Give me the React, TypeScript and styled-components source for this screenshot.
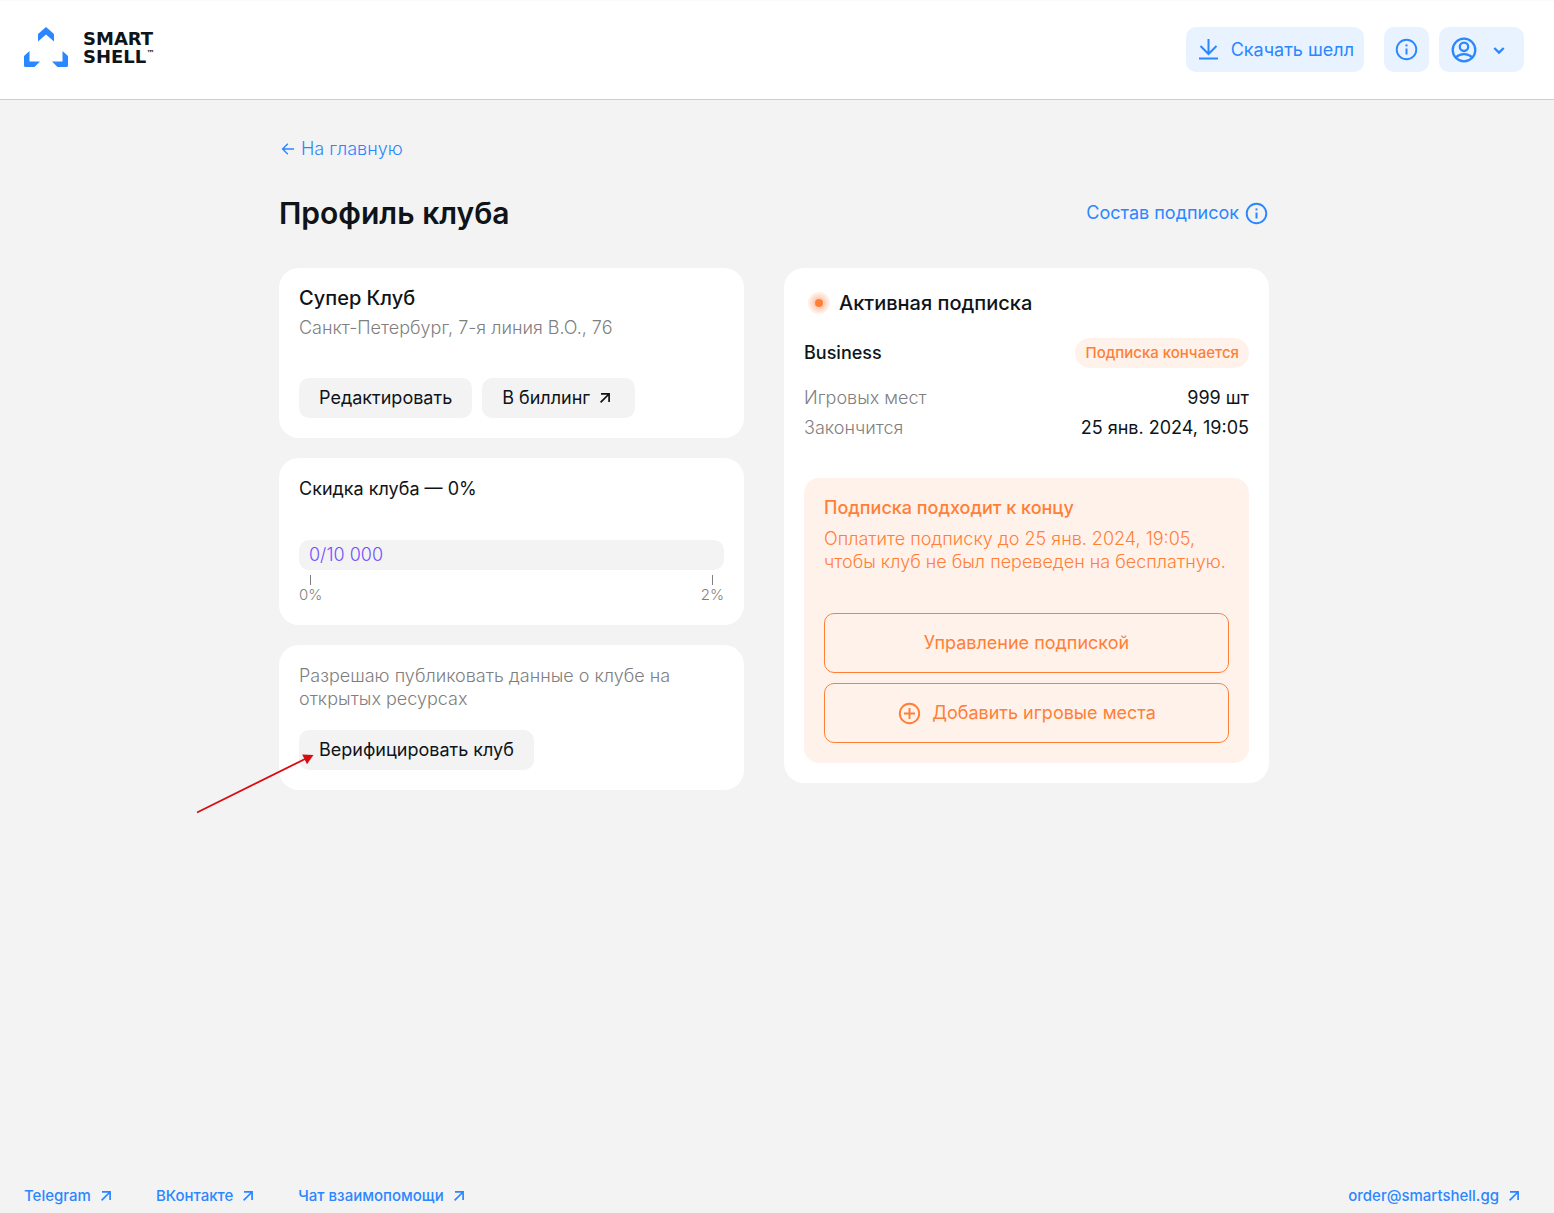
import React from 'react';
import styled, { createGlobalStyle } from 'styled-components';

const color = {
  ink: '#0e1419',
  muted: '#7f7f7f',
  page: '#f3f3f3',
  blue: '#2b87ff',
  blueSoft: '#e9f3ff',
  orange: '#ff7f37',
  orangeSoft: '#fff2eb',
  violet: '#7350ff',
};

const GlobalStyle = createGlobalStyle`
  *, *::before, *::after { box-sizing: border-box; }
  body {
    margin: 0;
    background: ${color.page};
    color: ${color.ink};
    font-family: Inter, "Liberation Sans", sans-serif;
    font-size: 18px;
    line-height: 20px;
  }
  h1, h2, h3, p, dl, dd { margin: 0; }
  button { font: inherit; color: inherit; border: 0; cursor: pointer; }
  a { color: ${color.blue}; text-decoration: none; }
  svg { display: block; flex: none; }
`;

const Page = styled.div`
  display: flex;
  flex-direction: column;
  min-height: 100vh;
`;

const Header = styled.header`
  display: flex;
  align-items: flex-start;
  justify-content: space-between;
  padding: 26px 30px 27px 24px;
  background: #fff;
  border-top: 1px solid #fafafa;
  border-bottom: 1px solid #cfcfcf;
`;

const Logo = styled.a`
  display: flex;
  align-items: center;
  gap: 14px;
  color: ${color.ink};
`;

const Wordmark = styled.span`
  display: flex;
  flex-direction: column;
  padding-top: 2px;
  font: bold 18px/18px "DejaVu Sans", Inter, sans-serif;
`;

const ShellLine = styled.span`
  display: flex;
  align-items: flex-start;
`;

const Trade = styled.small`
  font-size: 8px;
  line-height: 12px;
`;

const HeaderActions = styled.div`
  display: flex;
  gap: 10px;
`;

const HeaderButton = styled.button<{ $spaced?: boolean; $tight?: boolean }>`
  display: flex;
  align-items: center;
  gap: ${(p) => (p.$tight ? '5px' : '10px')};
  height: 45px;
  padding: 0 10px;
  margin-right: ${(p) => (p.$spaced ? '10px' : '0')};
  border-radius: 10px;
  background: ${color.blueSoft};
  color: ${color.blue};
`;

const Main = styled.main`
  flex: 1;
  padding: 38px 30px 40px 24px;
`;

const Content = styled.div`
  max-width: 990px;
  margin: 0 auto;
`;

const BackLink = styled.a`
  display: inline-flex;
  align-items: center;
  gap: 4px;
  font-weight: 300;
  line-height: 22px;
  vertical-align: top;
`;

const TitleRow = styled.div`
  display: flex;
  align-items: center;
  justify-content: space-between;
  margin: 35px 0 37px;
`;

const Title = styled.h1`
  font-size: 30px;
  line-height: 36px;
  font-weight: 600;
`;

const PlansLink = styled.a`
  display: flex;
  align-items: center;
  gap: 5px;
`;

const Columns = styled.div`
  display: grid;
  grid-template-columns: 465fr 485fr;
  align-items: start;
  gap: 40px;
`;

const Stack = styled.div`
  display: flex;
  flex-direction: column;
  gap: 20px;
`;

const Card = styled.section`
  padding: 20px;
  border-radius: 20px;
  background: #fff;
`;

const CardTitle = styled.h2`
  font-size: 20px;
  line-height: 20px;
  font-weight: 500;
`;

const Address = styled.p`
  margin: 10px 0 40px;
  color: ${color.muted};
  font-weight: 300;
`;

const Row = styled.div`
  display: flex;
  gap: 10px;
`;

const SoftButton = styled.button`
  display: flex;
  align-items: center;
  gap: 5px;
  height: 40px;
  padding: 0 20px;
  border-radius: 10px;
  background: ${color.page};
`;

const DiscountTitle = styled.p`
  line-height: 22px;
  margin-bottom: 40px;
`;

const Progress = styled.div`
  height: 30px;
  padding: 0 10px;
  border-radius: 10px;
  background: ${color.page};
  color: ${color.violet};
  font-weight: 300;
  line-height: 30px;
`;

const Scale = styled.div`
  display: flex;
  justify-content: space-between;
  margin-top: 5px;
`;

const Mark = styled.span`
  display: flex;
  flex-direction: column;
  align-items: center;
  color: ${color.muted};
  font-size: 15px;
  font-weight: 300;

  &::before {
    content: '';
    width: 1px;
    height: 10px;
    background: ${color.muted};
  }
`;

const Consent = styled.p`
  margin-bottom: 20px;
  color: ${color.muted};
  font-weight: 300;
  line-height: 1.25;
`;

const Pointed = styled.div`
  position: relative;
  width: fit-content;
`;

const PointerArrow = styled.svg`
  position: absolute;
  top: 20px;
  left: -105px;
  pointer-events: none;
`;

const StatusHead = styled.div`
  display: flex;
  align-items: center;
  gap: 5px;
`;

const PlanRow = styled.div`
  display: flex;
  align-items: center;
  justify-content: space-between;
  margin: 20px 0;
`;

const PlanName = styled.h3`
  font-size: 18px;
  font-weight: 500;
`;

const Badge = styled.span`
  padding: 0 10px;
  border-radius: 15px;
  background: ${color.orangeSoft};
  color: ${color.orange};
  font-size: 15px;
  font-weight: 450;
  line-height: 30px;
`;

const Details = styled.dl`
  display: flex;
  flex-direction: column;
  gap: 10px;
  margin-bottom: 40px;
`;

const Detail = styled.div`
  display: flex;
  justify-content: space-between;
`;

const DetailName = styled.dt`
  color: ${color.muted};
  font-weight: 300;
`;

const Notice = styled.div`
  display: flex;
  flex-direction: column;
  gap: 10px;
  padding: 20px;
  border-radius: 15px;
  background: ${color.orangeSoft};
  color: ${color.orange};
`;

const NoticeTitle = styled.h3`
  font-size: 18px;
  font-weight: 500;
`;

const NoticeText = styled.p`
  margin-bottom: 30px;
  font-weight: 300;
  line-height: 1.25;
`;

const OutlineButton = styled.button`
  display: flex;
  align-items: center;
  justify-content: center;
  gap: 10px;
  height: 60px;
  border: 1px solid ${color.orange};
  border-radius: 10px;
  background: transparent;
`;

const Footer = styled.footer`
  display: flex;
  gap: 40px;
  padding: 0 30px 7px 24px;
  font-size: 15px;
  font-weight: 450;
`;

const FooterLink = styled.a<{ $last?: boolean }>`
  display: flex;
  align-items: center;
  gap: 5px;
  margin-left: ${(p) => (p.$last ? 'auto' : '0')};
`;

const LogoMark = () => (
  <svg width="45" height="40" viewBox="0 0 45 40" fill={color.blue} aria-hidden="true">
    <path d="M22 0 30 7V14.500L22 7.500 14 14.500V7Z" />
    <path d="M0 29 5.500 24V34.500H16L10.500 40H1.500Q0 40 0 38.500Z" />
    <path d="M44 29 38.500 24V34.500H28L33.500 40H42.500Q44 40 44 38.500Z" />
  </svg>
);

const DownloadIcon = () => (
  <svg width="25" height="25" viewBox="0 0 25 25" fill="none" stroke="currentColor" strokeWidth="2" aria-hidden="true">
    <path d="M12.500 2V16.500M4.500 9 12.500 17 20.500 9" />
    <path d="M3 21.500H22" />
  </svg>
);

const InfoIcon = () => (
  <svg width="25" height="25" viewBox="0 0 25 25" fill="none" stroke="currentColor" aria-hidden="true">
    <circle cx="12.500" cy="12.500" r="9.800" strokeWidth="1.900" />
    <path d="M12.500 11.500V17.500" strokeWidth="2" />
    <path d="M12.500 7.400V9.400" strokeWidth="2" />
  </svg>
);

const UserIcon = () => (
  <svg width="30" height="30" viewBox="0 0 30 30" fill="none" stroke="currentColor" strokeWidth="2.300" aria-hidden="true">
    <circle cx="15" cy="15" r="11.300" />
    <circle cx="15" cy="11.800" r="4.200" />
    <path d="M6.800 22.500C9 20.300 12 19.200 15 19.200S21 20.300 23.200 22.500" />
  </svg>
);

const ChevronIcon = () => (
  <svg width="30" height="30" viewBox="0 0 30 30" fill="none" stroke="currentColor" strokeWidth="2.400" aria-hidden="true">
    <path d="M10.300 13 15 17.500 19.700 13" />
  </svg>
);

const BackIcon = () => (
  <svg width="18" height="18" viewBox="0 0 18 18" fill="none" stroke="currentColor" strokeWidth="1.400" aria-hidden="true">
    <path d="M15 9H4M8.800 3.800 3.600 9 8.800 14.200" />
  </svg>
);

const OutIcon = () => (
  <svg width="20" height="20" viewBox="0 0 20 20" fill="none" stroke="currentColor" strokeWidth="1.700" aria-hidden="true">
    <path d="M6 5.900H14.100V14M14 6 5.600 14.400" />
  </svg>
);

const PlusIcon = () => (
  <svg width="25" height="25" viewBox="0 0 25 25" fill="none" stroke="currentColor" aria-hidden="true">
    <circle cx="12.500" cy="12.500" r="9.700" strokeWidth="1.900" />
    <path d="M12.500 7V18M7 12.500H18" strokeWidth="1.900" />
  </svg>
);

const PulseIcon = () => (
  <svg width="30" height="30" viewBox="0 0 30 30" fill={color.orange} aria-hidden="true">
    <circle cx="15" cy="15" r="11" opacity="0.12" />
    <circle cx="15" cy="15" r="9" opacity="0.12" />
    <circle cx="15" cy="15" r="6.500" opacity="0.16" />
    <circle cx="15" cy="15" r="4" />
  </svg>
);

const details = [
  { name: 'Игровых мест', value: '999 шт' },
  { name: 'Закончится', value: '25 янв. 2024, 19:05' },
];

const footerLinks = ['Telegram', 'ВКонтакте', 'Чат взаимопомощи'];

export default function App() {
  return (
    <Page>
      <GlobalStyle />
      <Header>
        <Logo href="#">
          <LogoMark />
          <Wordmark>
            <span>SMART</span>
            <ShellLine>
              SHELL<Trade>™</Trade>
            </ShellLine>
          </Wordmark>
        </Logo>
        <HeaderActions>
          <HeaderButton $spaced>
            <DownloadIcon />
            Скачать шелл
          </HeaderButton>
          <HeaderButton aria-label="Информация">
            <InfoIcon />
          </HeaderButton>
          <HeaderButton aria-label="Аккаунт" $tight>
            <UserIcon />
            <ChevronIcon />
          </HeaderButton>
        </HeaderActions>
      </Header>

      <Main>
        <Content>
          <BackLink href="#">
            <BackIcon />
            На главную
          </BackLink>
          <TitleRow>
            <Title>Профиль клуба</Title>
            <PlansLink href="#">
              Состав подписок
              <InfoIcon />
            </PlansLink>
          </TitleRow>

          <Columns>
            <Stack>
              <Card>
                <CardTitle>Супер Клуб</CardTitle>
                <Address>Санкт-Петербург, 7-я линия В.О., 76</Address>
                <Row>
                  <SoftButton>Редактировать</SoftButton>
                  <SoftButton>
                    В биллинг
                    <OutIcon />
                  </SoftButton>
                </Row>
              </Card>

              <Card>
                <DiscountTitle>Скидка клуба — 0%</DiscountTitle>
                <Progress role="progressbar" aria-valuemin={0} aria-valuemax={10000} aria-valuenow={0}>
                  0/10 000
                </Progress>
                <Scale>
                  <Mark>0%</Mark>
                  <Mark>2%</Mark>
                </Scale>
              </Card>

              <Card>
                <Consent>Разрешаю публиковать данные о клубе на открытых ресурсах</Consent>
                <Pointed>
                  <SoftButton>Верифицировать клуб</SoftButton>
                  <PointerArrow width="125" height="65" viewBox="0 0 125 65" aria-hidden="true">
                    <path d="M3 62.500 111 9" stroke="#d90b10" strokeWidth="1.800" />
                    <path d="M119.500 5 108.200 4.600 113 14.200Z" fill="#d90b10" />
                  </PointerArrow>
                </Pointed>
              </Card>
            </Stack>

            <Card>
              <StatusHead>
                <PulseIcon />
                <CardTitle>Активная подписка</CardTitle>
              </StatusHead>
              <PlanRow>
                <PlanName>Business</PlanName>
                <Badge>Подписка кончается</Badge>
              </PlanRow>
              <Details>
                {details.map((d) => (
                  <Detail key={d.name}>
                    <DetailName>{d.name}</DetailName>
                    <dd>{d.value}</dd>
                  </Detail>
                ))}
              </Details>
              <Notice>
                <NoticeTitle>Подписка подходит к концу</NoticeTitle>
                <NoticeText>
                  Оплатите подписку до 25 янв. 2024, 19:05, чтобы клуб не был переведен на бесплатную.
                </NoticeText>
                <OutlineButton>Управление подпиской</OutlineButton>
                <OutlineButton>
                  <PlusIcon />
                  Добавить игровые места
                </OutlineButton>
              </Notice>
            </Card>
          </Columns>
        </Content>
      </Main>

      <Footer>
        {footerLinks.map((label) => (
          <FooterLink key={label} href="#">
            {label}
            <OutIcon />
          </FooterLink>
        ))}
        <FooterLink href="mailto:order@smartshell.gg" $last>
          order@smartshell.gg
          <OutIcon />
        </FooterLink>
      </Footer>
    </Page>
  );
}
